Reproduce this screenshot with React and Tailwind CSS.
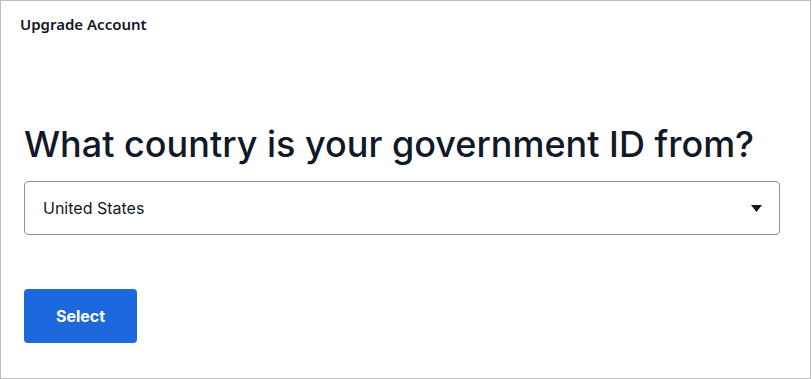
export default function App() {
  return (
    <div className="w-[812px] h-[379px] bg-white">
      <div className="w-[811px] h-[379px] border border-[#bdbdbd] flex flex-col">
        {/* Header */}
        <div
          className="pl-[19px] pt-[12px] text-[15px] leading-[22px] font-semibold text-[#111827]"
          style={{ fontFamily: '"Noto Sans", "Open Sans", sans-serif' }}
        >
          Upgrade Account
        </div>

        {/* Body */}
        <div className="px-[23px] pt-[87px]" style={{ fontFamily: 'Inter, "Liberation Sans", sans-serif' }}>
          <h1 className="text-[36px] leading-[44px] text-[#111827] font-medium">
            What country is your government ID from?
          </h1>

          <div className="mt-[15px] w-[756px] h-[54px] border border-[#8a93a6] rounded-[4px] flex items-center justify-between pl-[18px] pr-[17px]">
            <span className="text-[16px] text-[#111827]">United States</span>
            <svg width="11" height="7" viewBox="0 0 11 7">
              <path d="M0 0h11L5.5 7z" fill="#111827" />
            </svg>
          </div>

          <button className="mt-[54px] w-[113px] h-[54px] rounded-[4px] bg-[#1c68dc] text-white text-[16px] font-bold">
            Select
          </button>
        </div>
      </div>
    </div>
  );
}
